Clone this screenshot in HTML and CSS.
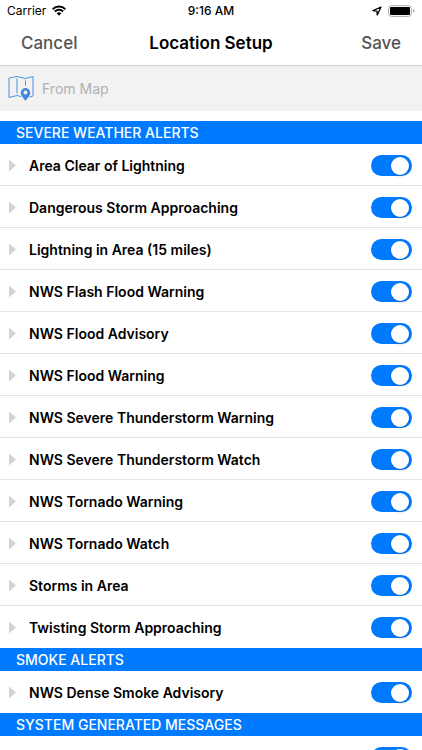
FILE: index.html
```
<!DOCTYPE html>
<html lang="en">
<head>
  <meta charset="UTF-8">
  <meta name="viewport" content="width=device-width, initial-scale=1.0">
  <title>Location Setup</title>
  <link rel="stylesheet" href="styles.css">
</head>

<body>
  <div class="status">
    <div class="carrier">
      <span>Carrier</span>
      <svg width="14" height="11" viewBox="0 0 14 11">
        <path d="M.6 4.200a9 9 0 0 1 12.800 0M2.900 6.500a5.800 5.800 0 0 1 8.200 0" fill="none" stroke="#000" stroke-width="2"/>
        <path d="M7 10.800 4.700 8.300a3.300 3.300 0 0 1 4.600 0z"/>
      </svg>
    </div>
    <div class="time">9:16 AM</div>
    <div class="battery">
      <svg width="10" height="10" viewBox="0 0 10 10">
        <path d="M9 1 1 4.700 4.900 5.100 5.300 9z" fill="none" stroke="#000" stroke-width="1.300" stroke-linejoin="round"/>
      </svg>
      <svg width="27" height="12" viewBox="0 0 27 12">
        <rect x=".6" y=".6" width="22.800" height="10.800" rx="3" fill="none" stroke="#aaa"/>
        <rect x="2" y="2" width="20" height="8" rx="1"/>
        <path d="M25 4v4c2-1 2-3 0-4z" fill="#aaa"/>
      </svg>
    </div>
  </div>

  <div class="navbar">
    <button type="button">Cancel</button>
    <h1>Location Setup</h1>
    <button type="button" class="save">Save</button>
  </div>

  <label class="search">
    <svg width="26" height="27" viewBox="0 0 26 27" fill="none" stroke="#4a90e2">
      <path d="M13 21.500 9 20.500 1 22.500V3L9 1.500l8.500 2L25 1.500V21l-3.500 1" stroke-linejoin="round"/>
      <path d="M9 3.500v15M17.500 5.500v5"/>
      <path d="M17.500 26c-1.700-2.800-4.700-5.200-4.700-8.300a4.700 4.700 0 0 1 9.400 0c0 3.100-3 5.500-4.700 8.300z" fill="#3f86dc" stroke="none"/>
      <circle cx="17.500" cy="17.500" r="2" fill="#f2f2f2" stroke="none"/>
    </svg>
    <input type="text" placeholder="From Map" aria-label="Location">
  </label>

  <div class="list">
    <div class="tail"></div>

    <h2>SEVERE WEATHER ALERTS</h2>
    <ul>
      <li><button type="button" class="arrow" aria-label="Expand"></button><label for="a1">Area Clear of Lightning</label><input type="checkbox" id="a1" checked></li>
      <li><button type="button" class="arrow" aria-label="Expand"></button><label for="a2">Dangerous Storm Approaching</label><input type="checkbox" id="a2" checked></li>
      <li><button type="button" class="arrow" aria-label="Expand"></button><label for="a3">Lightning in Area (15 miles)</label><input type="checkbox" id="a3" checked></li>
      <li><button type="button" class="arrow" aria-label="Expand"></button><label for="a4">NWS Flash Flood Warning</label><input type="checkbox" id="a4" checked></li>
      <li><button type="button" class="arrow" aria-label="Expand"></button><label for="a5">NWS Flood Advisory</label><input type="checkbox" id="a5" checked></li>
      <li><button type="button" class="arrow" aria-label="Expand"></button><label for="a6">NWS Flood Warning</label><input type="checkbox" id="a6" checked></li>
      <li><button type="button" class="arrow" aria-label="Expand"></button><label for="a7">NWS Severe Thunderstorm Warning</label><input type="checkbox" id="a7" checked></li>
      <li><button type="button" class="arrow" aria-label="Expand"></button><label for="a8">NWS Severe Thunderstorm Watch</label><input type="checkbox" id="a8" checked></li>
      <li><button type="button" class="arrow" aria-label="Expand"></button><label for="a9">NWS Tornado Warning</label><input type="checkbox" id="a9" checked></li>
      <li><button type="button" class="arrow" aria-label="Expand"></button><label for="a10">NWS Tornado Watch</label><input type="checkbox" id="a10" checked></li>
      <li><button type="button" class="arrow" aria-label="Expand"></button><label for="a11">Storms in Area</label><input type="checkbox" id="a11" checked></li>
      <li><button type="button" class="arrow" aria-label="Expand"></button><label for="a12">Twisting Storm Approaching</label><input type="checkbox" id="a12" checked></li>
    </ul>

    <h2>SMOKE ALERTS</h2>
    <ul>
      <li><button type="button" class="arrow" aria-label="Expand"></button><label for="b1">NWS Dense Smoke Advisory</label><input type="checkbox" id="b1" checked></li>
    </ul>

    <h2>SYSTEM GENERATED MESSAGES</h2>
    <ul>
      <li><input type="checkbox" id="c1" aria-label="System messages" checked></li>
    </ul>
  </div>
</body>
</html>
```
FILE: styles.css
```
* {
  box-sizing: border-box;
}

body {
  display: flex;
  flex-direction: column;
  height: 100vh;
  margin: 0;
  overflow: hidden;
  background: #fff;
  color: #000;
  font-family: Inter, "Liberation Sans", sans-serif;
}

button {
  border: none;
  padding: 0;
  background: none;
  font-family: inherit;
  cursor: pointer;
}

/* ---------- Status bar ---------- */

.status {
  display: grid;
  grid-template-columns: 1fr auto 1fr;
  align-items: center;
  flex: none;
  height: 21px;
  padding: 0 7px;
  font-size: 12px;
}

.carrier, .battery {
  display: flex;
  align-items: center;
  gap: 6px;
}

.battery {
  justify-content: flex-end;
}

.time {
  font-weight: 500;
}

/* ---------- Nav bar ---------- */

.navbar {
  display: grid;
  grid-template-columns: 1fr auto 1fr;
  align-items: center;
  flex: none;
  height: 45px;
  padding: 0 21px;
  border-bottom: 1px solid #d0d0d0;
}

.navbar h1 {
  margin: 0;
  font-size: 17px;
  font-weight: 600;
}

.navbar button {
  justify-self: start;
  color: #555;
  font-size: 17px;
  font-weight: 500;
}

.navbar .save {
  justify-self: end;
}

/* ---------- Location field ---------- */

.search {
  display: flex;
  align-items: center;
  flex: none;
  gap: 8px;
  height: 45px;
  padding: 0 8px;
  background: #f2f2f2;
}

.search input {
  flex: 1;
  min-width: 0;
  padding: 0;
  border: none;
  outline: none;
  background: transparent;
  font-family: inherit;
  font-size: 14px;
}

.search input::placeholder {
  color: #b0b0b0;
}

/* ---------- Alerts ---------- */

.list {
  flex: 1;
  min-height: 0;
  overflow: hidden;
}

.tail {
  height: 10px;
}

.list h2 {
  height: 23px;
  margin: 0;
  padding: 0 16px;
  background: #007aff;
  color: #fff;
  font-size: 14px;
  font-weight: 500;
  line-height: 23px;
}

.list ul {
  margin: 0;
  padding: 0;
  list-style: none;
}

.list li {
  display: flex;
  align-items: center;
  height: 42px;
  padding: 2px 10px 0 9px;
  border-bottom: 1px solid #e4e4e4;
}

.list li:last-child {
  border-bottom-color: transparent;
}

.list label {
  font-size: 14px;
  font-weight: 600;
}

.arrow {
  width: 7px;
  height: 12px;
  margin-right: 13px;
  background: #d3d3d3;
  clip-path: polygon(0 0, 100% 50%, 0 100%);
}

/* Switch */

input[type=checkbox] {
  -webkit-appearance: none;
  appearance: none;
  display: flex;
  align-items: center;
  width: 41px;
  height: 21px;
  margin: 0 0 0 auto;
  padding: 0 3px 0 2px;
  border-radius: 11px;
  background: #ccc;
  cursor: pointer;
}

input[type=checkbox]:before {
  content: "";
  width: 18px;
  height: 18px;
  border-radius: 50%;
  background: #fff;
  box-shadow: 0 1px 3px rgba(0,0,0, 0.2);
}

input[type=checkbox]:checked {
  justify-content: flex-end;
  background: #007aff;
}
```
